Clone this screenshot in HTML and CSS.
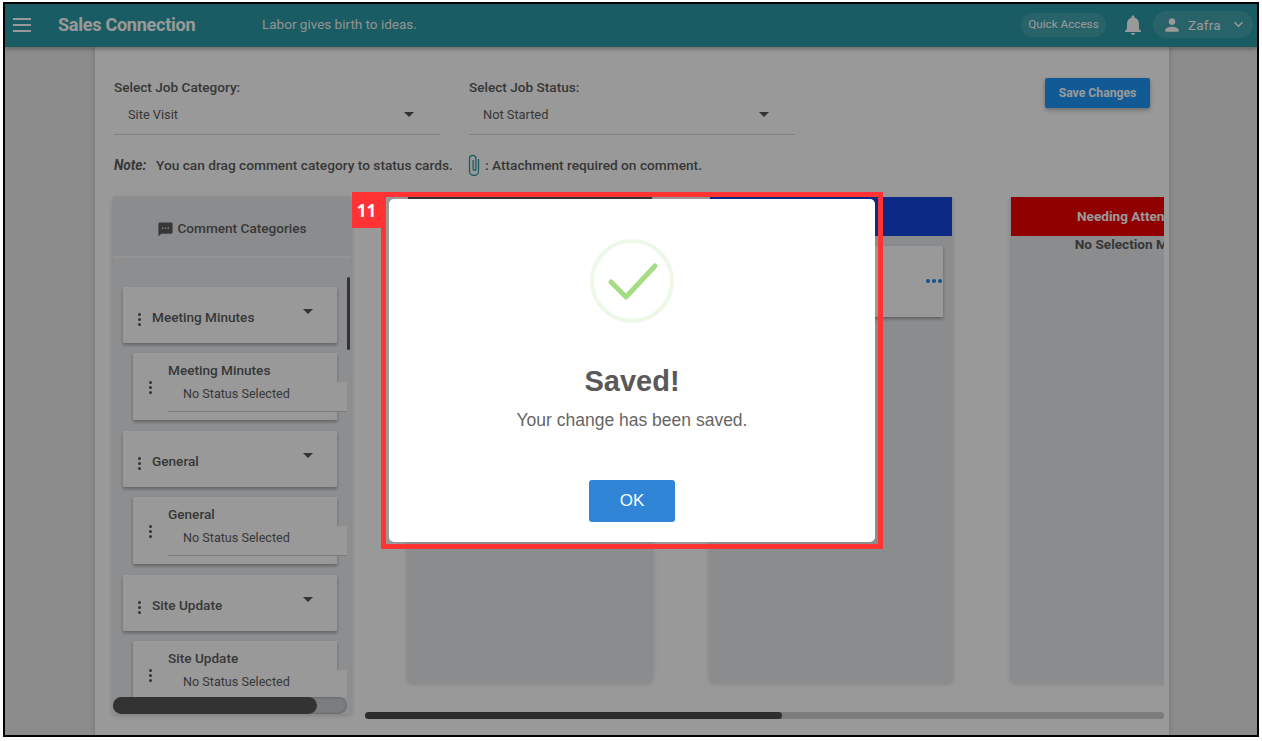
FILE: index.html
```html
<!DOCTYPE html>
<html lang="en">
<head>
  <meta charset="UTF-8">
  <title>Sales Connection</title>
  <link rel="stylesheet" href="styles.css">
</head>
<body>
  <div class="frame">
    <header class="topbar">
      <svg class="menu-icon" viewBox="0 0 18 14"><path d="M0 0h18v2H0zM0 6h18v2H0zM0 12h18v2H0z"/></svg>
      <div class="brand">Sales Connection</div>
      <div class="tagline">Labor gives birth to ideas.</div>
      <div class="quick">Quick Access</div>
      <svg class="bell" viewBox="0 0 24 24"><path d="M12 22c1.100 0 2-.9 2-2h-4c0 1.100.9 2 2 2zm6-6v-5c0-3.100-1.600-5.600-4.500-6.300V4c0-.8-.7-1.500-1.500-1.500s-1.500.7-1.500 1.500v.7C7.600 5.400 6 7.900 6 11v5l-2 2v1h16v-1l-2-2z"/></svg>
      <div class="user">
        <svg class="user-icon" viewBox="0 0 24 24"><path d="M12 12c2.200 0 4-1.800 4-4s-1.800-4-4-4-4 1.800-4 4 1.800 4 4 4zm0 2c-2.700 0-8 1.300-8 4v2h16v-2c0-2.700-5.300-4-8-4z"/></svg>
        <span>Zafra</span>
        <svg class="chevron" viewBox="0 0 12 8"><path d="M1.500 1.500 6 6l4.500-4.500" fill="none" stroke-width="1.800"/></svg>
      </div>
    </header>

    <main class="page">
      <div class="filters">
        <div class="field">
          <div class="field-label">Select Job Category:</div>
          <div class="select">Site Visit<span class="caret"></span></div>
        </div>
        <div class="field">
          <div class="field-label">Select Job Status:</div>
          <div class="select">Not Started<span class="caret"></span></div>
        </div>
        <div class="save">Save Changes</div>
      </div>

      <div class="note">
        <em>Note:</em>
        <span class="note-text">You can drag comment category to status cards.</span>
        <svg class="clip" viewBox="0 0 12 22"><path d="M10.500 5v12a4.500 4.500 0 0 1-9 0V4.500a3.200 3.200 0 0 1 6.400 0V15a1.400 1.400 0 0 1-2.800 0V6" fill="none" stroke-width="1.300"/></svg>
        <span>: Attachment required on comment.</span>
      </div>

      <div class="workspace">
        <aside class="panel">
          <div class="panel-head">
            <svg class="chat" viewBox="0 0 24 24"><path d="M20 2H4a2 2 0 0 0-2 2v18l4-4h14a2 2 0 0 0 2-2V4a2 2 0 0 0-2-2zM9 11H7V9h2zm4 0h-2V9h2zm4 0h-2V9h2z"/></svg>
            Comment Categories
          </div>
          <div class="panel-list">
            <div class="cat">
              <span class="dots"><i></i><i></i><i></i></span>
              <span class="cat-name">Meeting Minutes</span>
              <span class="caret cat-caret"></span>
            </div>
            <div class="sub">
              <span class="dots"><i></i><i></i><i></i></span>
              <div class="sub-body">
                <div class="sub-name">Meeting Minutes</div>
                <div class="sub-status">No Status Selected</div>
              </div>
            </div>
            <div class="cat">
              <span class="dots"><i></i><i></i><i></i></span>
              <span class="cat-name">General</span>
              <span class="caret cat-caret"></span>
            </div>
            <div class="sub">
              <span class="dots"><i></i><i></i><i></i></span>
              <div class="sub-body">
                <div class="sub-name">General</div>
                <div class="sub-status">No Status Selected</div>
              </div>
            </div>
            <div class="cat">
              <span class="dots"><i></i><i></i><i></i></span>
              <span class="cat-name">Site Update</span>
              <span class="caret cat-caret"></span>
            </div>
            <div class="sub">
              <span class="dots"><i></i><i></i><i></i></span>
              <div class="sub-body">
                <div class="sub-name">Site Update</div>
                <div class="sub-status">No Status Selected</div>
              </div>
            </div>
          </div>
          <div class="vbar"></div>
          <div class="hbar"><div class="hbar-thumb"></div></div>
        </aside>

        <section class="board">
          <div class="columns">
            <div class="column">
              <div class="column-head head-dark">Not Started</div>
            </div>
            <div class="column">
              <div class="column-head head-blue">In Progress</div>
              <div class="job-card"><span class="more"><i></i><i></i><i></i></span></div>
            </div>
            <div class="column">
              <div class="column-head head-red">Needing Attention</div>
              <div class="column-empty">No Selection Made</div>
            </div>
          </div>
          <div class="board-bar"><div class="board-thumb"></div></div>
        </section>
      </div>
    </main>

    <div class="overlay">
      <div class="callout">
        <div class="badge">11</div>
        <div class="dialog">
          <svg class="tick" viewBox="0 0 84 84">
            <circle cx="42" cy="42" r="40" fill="none" stroke="#edf8e7" stroke-width="4"/>
            <path d="M21 43 L36 58 L65 27" fill="none" stroke="#a5dc86" stroke-width="5" stroke-linecap="round" stroke-linejoin="round"/>
          </svg>
          <h2 class="dialog-title">Saved!</h2>
          <p class="dialog-text">Your change has been saved.</p>
          <div class="ok">OK</div>
        </div>
      </div>
    </div>
  </div>
</body>
</html>
```

FILE: styles.css
```css
*{
  margin: 0px;
  padding: 0px;
  box-sizing: border-box;
}
html,body{
  height: 100%;
  overflow: hidden;
  background-color: #fff;
}
body{
  padding: 2px 3px 4px 3px;
  font-family: Roboto, "Liberation Sans", sans-serif;
  font-size: 13.6px;
  color: #5c5c5c;
}
.frame{
  position: relative;
  height: 735px;
  border: 2px solid #000;
  background-color: #e9e9e9;
  display: flex;
  flex-direction: column;
  overflow: hidden;
}

/* top bar */
.topbar{
  height: 43px;
  flex-shrink: 0;
  background-color: #2a99a5;
  color: #fff;
  display: flex;
  align-items: center;
  padding-bottom: 2px;
  position: relative;
  z-index: 1;
  box-shadow: 0 2px 4px rgba(0,0,0,.3);
}
.menu-icon{
  width: 18px;
  height: 14px;
  margin-left: 8px;
  fill: #fff;
}
.brand{
  margin-left: 27px;
  width: 204px;
  font-size: 18px;
  font-weight: 700;
  letter-spacing: -0.25px;
}
.tagline{
  font-size: 13.5px;
  color: #f2f2f2;
  margin-top: -1px;
}
.quick{
  margin-left: auto;
  width: 85px;
  height: 24px;
  padding-bottom: 2px;
  border-radius: 12px;
  background-color: rgba(255,255,255,.12);
  font-size: 11.7px;
  display: flex;
  align-items: center;
  justify-content: center;
}
.bell{
  width: 24px;
  height: 24px;
  margin-left: 15px;
  fill: #fff;
}
.user{
  width: 100px;
  height: 27px;
  margin-left: 8px;
  margin-right: 4px;
  border-radius: 14px;
  background-color: rgba(255,255,255,.12);
  display: flex;
  align-items: center;
  font-size: 13.5px;
  letter-spacing: .2px;
}
.user-icon{
  width: 20px;
  height: 20px;
  margin-left: 9px;
  margin-right: 6px;
  fill: #fff;
}
.chevron{
  width: 11px;
  height: 7px;
  margin-left: 12px;
  stroke: #fff;
}

/* page */
.page{
  width: 1074px;
  margin-left: 90px;
  flex: 1;
  min-height: 0;
  padding: 31px 18px 0 18px;
  background-color: #fff;
  box-shadow: 0 0 6px rgba(0,0,0,.2);
}
.filters{
  display: flex;
  padding-left: 1px;
  padding-right: 1px;
}
.field{
  width: 326px;
  margin-right: 29px;
}
.field-label{
  font-weight: 500;
  line-height: 18px;
  margin-bottom: 4px;
}
.select{
  height: 35px;
  padding: 0 0 5px 14px;
  border-bottom: 1px solid #d8d8d8;
  font-size: 12.8px;
  display: flex;
  align-items: center;
  justify-content: space-between;
}
.select .caret{
  margin-right: 26px;
}
.caret{
  width: 0;
  height: 0;
  border-left: 5px solid transparent;
  border-right: 5px solid transparent;
  border-top: 5px solid #555;
}
.save{
  margin-left: auto;
  width: 105px;
  height: 30px;
  border-radius: 2px;
  background-color: #1e96fa;
  color: #fff;
  font-size: 12.2px;
  font-weight: 700;
  display: flex;
  align-items: center;
  justify-content: center;
  box-shadow: 0 2px 4px rgba(0,0,0,.3);
}
.note{
  height: 20px;
  margin-top: 20px;
  padding-left: 1px;
  font-size: 13.7px;
  font-weight: 500;
  display: flex;
  align-items: center;
}
.note em{
  width: 42px;
  font-weight: 700;
}
.note-text{
  width: 312px;
}
.clip{
  width: 12px;
  height: 22px;
  margin-right: 5px;
  stroke: #2a99a5;
  flex-shrink: 0;
}

/* layout below the note */
.workspace{
  display: flex;
  margin-top: 22px;
}
.panel{
  position: relative;
  width: 238px;
  height: 517px;
  flex-shrink: 0;
  background-color: #ebedf0;
  border-radius: 4px 4px 0 0;
  box-shadow: 0 1px 5px rgba(0,0,0,.2);
}
.panel-head{
  height: 61px;
  border-bottom: 2px solid #f7f7f7;
  font-weight: 500;
  display: flex;
  align-items: center;
  justify-content: center;
  padding-top: 3px;
  background-color: #e8eaec;
}
.chat{
  width: 17px;
  height: 17px;
  margin-right: 3px;
  margin-top: 3px;
  fill: #5c5c5c;
}
.panel-list{
  height: 439px;
  padding: 29px 14px 0 10px;
  overflow: hidden;
}
.cat{
  height: 56px;
  margin-bottom: 10px;
  background-color: #fff;
  box-shadow: 0 2px 3px rgba(0,0,0,.3);
  display: flex;
  align-items: center;
  position: relative;
  font-weight: 500;
}
.cat-name{
  margin-left: 11px;
  padding-top: 4px;
}
.cat .dots{
  margin-left: 15px;
  margin-top: 9px;
}
.cat-caret{
  position: absolute;
  right: 24px;
  top: 22px;
}
.dots{
  display: flex;
  flex-direction: column;
  gap: 2px;
}
.dots i{
  width: 3px;
  height: 3px;
  border-radius: 50%;
  background-color: #555;
}
.sub{
  height: 67px;
  margin-left: 10px;
  margin-bottom: 11px;
  background-color: #fff;
  box-shadow: 0 2px 3px rgba(0,0,0,.3);
  display: flex;
  align-items: flex-start;
}
.sub:last-child{
  height: 90px;
}
.sub .dots{
  margin-left: 16px;
  margin-top: 28px;
}
.sub-body{
  margin-left: 16px;
  flex: 1;
  margin-right: -10px;
  min-width: 0;
}
.sub-name{
  font-weight: 500;
  line-height: 20px;
  margin-top: 7px;
}
.sub-status{
  height: 30px;
  margin-top: 2px;
  padding-left: 15px;
  padding-top: 4px;
  font-size: 12.6px;
  background-color: #fff;
  border-bottom: 1px solid #cfcfcf;
}
.vbar{
  position: absolute;
  top: 80px;
  right: 1px;
  width: 3px;
  height: 73px;
  border-radius: 2px;
  background-color: #555;
}
.hbar{
  position: absolute;
  left: 0;
  bottom: 0;
  width: 234px;
  height: 17px;
  border-radius: 9px;
  background-color: #cfd1d3;
  box-shadow: inset 0 0 3px rgba(0,0,0,.3);
}
.hbar-thumb{
  width: 204px;
  height: 17px;
  border-radius: 9px;
  background-color: #555;
}

/* status columns */
.board{
  width: 799px;
  margin-left: 14px;
  flex-shrink: 0;
}
.columns{
  height: 490px;
  padding-left: 42px;
  display: flex;
  align-items: flex-start;
  gap: 56px;
  overflow: hidden;
}
.column{
  width: 245px;
  height: 486px;
  flex-shrink: 0;
  background-color: #e7e9ec;
  border-radius: 0 0 6px 6px;
  box-shadow: 0 1px 5px rgba(0,0,0,.15);
  padding: 0 1px;
}
.column:first-child{
  width: 246px;
}
.column:nth-child(2){
  width: 244px;
  margin-right: 1px;
}
.column-head{
  height: 39px;
  padding-bottom: 2px;
  color: #fff;
  font-weight: 700;
  font-size: 13.6px;
  display: flex;
  align-items: center;
  justify-content: center;
}
.head-dark{
  background-color: #555;
}
.head-blue{
  background-color: #1447de;
}
.head-red{
  background-color: #f00000;
}
.column-empty{
  margin-top: -1px;
  text-align: center;
  font-weight: 700;
  line-height: 18px;
  color: #5c5c5c;
}
.job-card{
  height: 71px;
  margin: 10px 9px 0 10px;
  background-color: #fff;
  box-shadow: 0 2px 3px rgba(0,0,0,.3);
  display: flex;
  justify-content: flex-end;
  padding: 33px 1px 0 0;
}
.more{
  display: flex;
  gap: 2px;
  height: 4px;
}
.more i{
  width: 4px;
  height: 4px;
  border-radius: 50%;
  background-color: #1e88e5;
}
.board-bar{
  height: 7px;
  margin-top: 25px;
  border-radius: 4px;
  background-color: #cfcfcf;
}
.board-thumb{
  width: 417px;
  height: 7px;
  border-radius: 4px;
  background-color: #4c4c4c;
}

/* dim layer and saved dialog */
.overlay{
  position: absolute;
  inset: 0;
  z-index: 2;
  background-color: rgba(0,0,0,.4);
}
.callout{
  position: absolute;
  left: 376px;
  top: 188px;
  width: 502px;
  height: 357px;
  padding: 2px 3px;
  border: 5px solid #ff3333;
}
.badge{
  position: absolute;
  left: -34px;
  top: -5px;
  width: 29px;
  height: 36px;
  background-color: #ff3333;
  color: #fff;
  font-family: "Open Sans", sans-serif;
  font-size: 17px;
  font-weight: 700;
  display: flex;
  align-items: center;
  justify-content: center;
}
.dialog{
  height: 100%;
  background-color: #fff;
  border-radius: 5px;
  font-family: "Liberation Sans", Arial, sans-serif;
  display: flex;
  flex-direction: column;
  align-items: center;
  padding-top: 40px;
}
.tick{
  width: 84px;
  height: 84px;
}
.dialog-title{
  margin-top: 40px;
  font-size: 29px;
  line-height: 36px;
  font-weight: 700;
  color: #595959;
}
.dialog-text{
  margin-top: 10px;
  font-size: 17.5px;
  line-height: 22px;
  color: #666;
}
.ok{
  margin-top: 49px;
  width: 86px;
  height: 42px;
  border-radius: 3px;
  background-color: #3085d6;
  color: #fff;
  font-size: 17px;
  display: flex;
  align-items: center;
  justify-content: center;
}
```
